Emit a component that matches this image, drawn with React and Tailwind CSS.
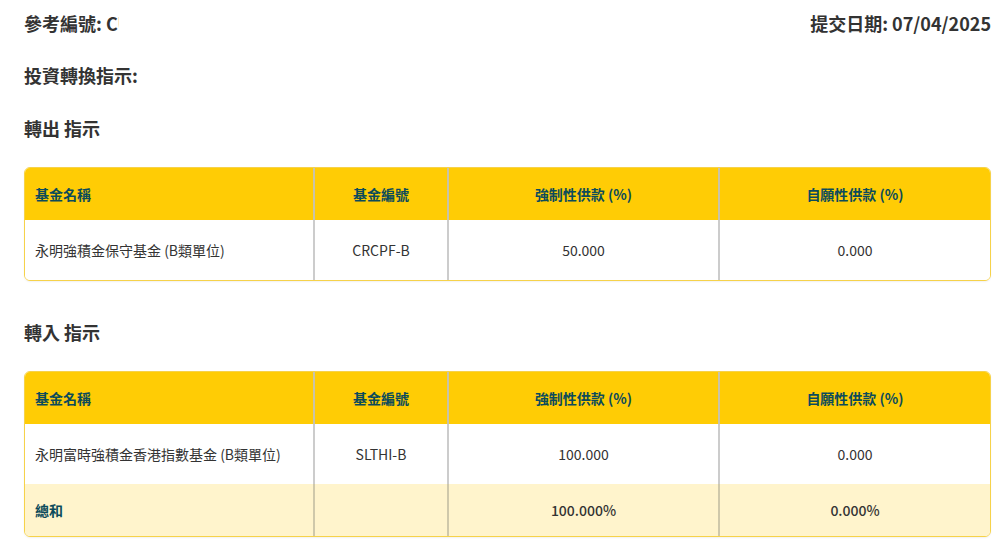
import React from "react";

const cols = "grid grid-cols-[288px_134px_271px_1fr]";

function FundTable({ rows, total }) {
  return (
    <div className="rounded-md border border-[#f6d24a] overflow-hidden shadow-[0_1px_2px_rgba(0,0,0,0.06)]">
      {/* 表頭 */}
      <div className={`${cols} h-[52px] bg-[#ffcc05] text-[14px] font-bold text-[#0c4b5b]`}>
        <div className="flex items-center pl-[10px]">基金名稱</div>
        <div className="flex items-center justify-center border-l-2 border-[#c9c3a8]">基金編號</div>
        <div className="flex items-center justify-center border-l-2 border-[#c9c3a8]">強制性供款 (%)</div>
        <div className="flex items-center justify-center border-l-2 border-[#c9c3a8]">自願性供款 (%)</div>
      </div>

      {rows.map((r) => (
        <div key={r.code} className={`${cols} h-[60px] bg-white text-[14px] text-[#333]`}>
          <div className="flex items-center pl-[10px]">{r.name}</div>
          <div className="flex items-center justify-center border-l-2 border-[#cccccc]">{r.code}</div>
          <div className="flex items-center justify-center border-l-2 border-[#cccccc]">{r.mpf}</div>
          <div className="flex items-center justify-center border-l-2 border-[#cccccc]">{r.vol}</div>
        </div>
      ))}

      {total && (
        <div className={`${cols} h-[52px] bg-[#fff4cc] text-[14px] text-[#333]`}>
          <div className="flex items-center pl-[10px] font-bold text-[#0c4b5b]">總和</div>
          <div className="border-l-2 border-[#cfc8aa]"></div>
          <div className="flex items-center justify-center border-l-2 border-[#cfc8aa] font-medium">{total.mpf}</div>
          <div className="flex items-center justify-center border-l-2 border-[#cfc8aa] font-medium">{total.vol}</div>
        </div>
      )}
    </div>
  );
}

export default function App() {
  return (
    <main
      className="min-h-screen bg-white pl-[24px] pr-[10px] pt-[11px] text-[#333]"
      style={{ fontFamily: '"Noto Sans CJK TC", "Noto Sans", sans-serif' }}
    >
      {/* 參考編號 / 提交日期 */}
      <div className="flex justify-between items-center h-6 text-[18px] font-bold leading-6">
        <div className="flex whitespace-nowrap">
          <span>參考編號:&nbsp;</span>
          <span className="w-[13px] overflow-hidden">CU8842</span>
        </div>
        <div>提交日期: 07/04/2025</div>
      </div>

      <h2 className="mt-[28px] text-[18px] font-bold leading-6">投資轉換指示:</h2>

      <h3 className="mt-[29px] text-[18px] font-bold leading-6">轉出 指示</h3>
      <div className="mt-[27px]">
        <FundTable
          rows={[{ name: "永明強積金保守基金 (B類單位)", code: "CRCPF-B", mpf: "50.000", vol: "0.000" }]}
        />
      </div>

      <h3 className="mt-[39px] text-[18px] font-bold leading-6">轉入 指示</h3>
      <div className="mt-[27px]">
        <FundTable
          rows={[{ name: "永明富時強積金香港指數基金 (B類單位)", code: "SLTHI-B", mpf: "100.000", vol: "0.000" }]}
          total={{ mpf: "100.000%", vol: "0.000%" }}
        />
      </div>
    </main>
  );
}
